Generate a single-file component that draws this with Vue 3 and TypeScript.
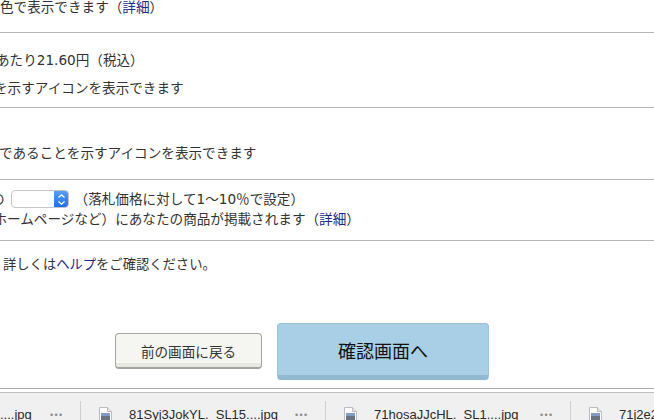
<script setup lang="ts">
interface Download {
  name: string
}

const downloads: Download[] = [
  { name: '81Syj3JokYL._SL15....jpg' },
  { name: '71hosaJJcHL._SL1....jpg' },
  { name: '71j2e2' }
]
</script>

<template>
  <div class="page">
    <main class="form">
      <section class="row row-color">
        <p class="line">色で表示できます（<a>詳細</a>）</p>
      </section>
      <section class="row row-price">
        <p class="line clip-a">あたり21.60円（税込）</p>
        <p class="line line-icon clip-b">を示すアイコンを表示できます</p>
      </section>
      <section class="row row-badge">
        <p class="line clip-c">であることを示すアイコンを表示できます</p>
      </section>
      <section class="row row-affiliate">
        <p class="line line-select clip-d">
          の
          <span class="select">
            <span class="select-arrows">
              <svg width="9" height="13" viewBox="0 0 9 13" fill="none" stroke="#fff" stroke-width="1.3">
                <path d="M1.5 4.5 4.5 1.8 7.5 4.5" />
                <path d="M1.5 8.5 4.5 11.2 7.5 8.5" />
              </svg>
            </span>
          </span>
          <span class="select-note">（落札価格に対して1〜10％で設定）</span>
        </p>
        <p class="line clip-e">ホームページなど）にあなたの商品が掲載されます（<a>詳細</a>）</p>
      </section>
      <section class="row-help">
        <p class="line">詳しくは<a>ヘルプ</a>をご確認ください。</p>
      </section>
      <div class="actions">
        <button class="btn-back" type="button">前の画面に戻る</button>
        <button class="btn-next" type="button">確認画面へ</button>
      </div>
    </main>
    <footer class="shelf">
      <div class="shelf-item shelf-first">
        <span class="file-name">....jpg</span>
        <span class="dots">•••</span>
      </div>
      <div v-for="d in downloads" :key="d.name" class="shelf-item">
        <svg class="file-icon" width="13" height="18" viewBox="0 0 13 18">
          <path d="M.5.5H8.5L12.5 4.5V17.5H.5Z" fill="#fbfbfb" stroke="#b9bcc2" />
          <path d="M8.5.5V4.5H12.5" fill="#e4e6ea" stroke="#b9bcc2" />
          <rect x="2" y="6" width="9" height="5" fill="#7f9dc4" />
          <rect x="2" y="9" width="9" height="4" fill="#6a7480" />
        </svg>
        <span class="file-name">{{ d.name }}</span>
        <span class="dots">•••</span>
      </div>
    </footer>
  </div>
</template>

<style scoped>
.page {
  width: 654px;
  height: 420px;
  overflow: hidden;
  display: flex;
  flex-direction: column;
  background: #fff;
  color: #333;
  font-family: "DejaVu Sans", "Noto Sans CJK JP", sans-serif;
  font-size: 13.6px;
}

.form {
  height: 389px;
  flex: none;
  border-bottom: 1px solid #a9a9a9;
  box-sizing: border-box;
}

.row {
  border-bottom: 1px solid #b5b5b5;
  box-sizing: border-box;
}

.row-color {
  height: 33px;
}

.row-price {
  height: 75px;
  padding-top: 17px;
}

.row-badge {
  height: 72px;
  padding-top: 35px;
}

.row-affiliate {
  height: 61px;
  padding-top: 9px;
}

.row-help {
  padding: 14px 0 0 3px;
  font-size: 13.3px;
}

.line {
  margin: 0;
  height: 20px;
  line-height: 20px;
  white-space: nowrap;
}

.row-color .line {
  height: 14px;
  line-height: 14px;
}

.line-icon {
  margin-top: 8px;
}

.clip-a {
  margin-left: -4px;
}

.clip-b {
  margin-left: -6px;
}

.clip-c {
  margin-left: -1px;
}

.clip-d {
  margin-left: -9px;
}

.clip-e {
  margin-left: -6.5px;
}

a {
  color: #1a2a8c;
}

.line-select {
  display: flex;
  align-items: center;
}

.select {
  display: inline-flex;
  justify-content: flex-end;
  width: 58px;
  height: 18px;
  margin-left: 6px;
  box-sizing: border-box;
  border: 1px solid #c4c4c4;
  border-radius: 4px;
  background: #fff;
  overflow: hidden;
}

.select-arrows {
  display: flex;
  align-items: center;
  justify-content: center;
  width: 15px;
  margin: -1px -1px -1px 0;
  background: linear-gradient(#5aa2fb, #1a6cf0);
}

.select-note {
  margin-left: 6px;
}

.actions {
  display: flex;
  align-items: flex-end;
  gap: 15px;
  margin-top: 48px;
  padding-left: 115px;
}

.btn-back {
  width: 147px;
  height: 36px;
  margin-bottom: 11px;
  border: 1px solid #a5a5a0;
  border-bottom-width: 2px;
  border-radius: 4px;
  background: linear-gradient(#f5f5f1 88%, #e8e8e3 88%);
  color: #333;
  font: inherit;
}

.btn-next {
  width: 212px;
  height: 57px;
  margin-bottom: 0;
  border: 1px solid #9cc3dc;
  border-bottom: 5px solid #8fb9d3;
  border-radius: 4px;
  background: #a8cfe6;
  color: #111;
  font: inherit;
  font-size: 18px;
}

.shelf {
  flex: 1;
  display: flex;
  margin-top: 3px;
  border-top: 1px solid #bdbdbd;
  background: #f0f0f0;
  padding-top: 8px;
}

.shelf-item {
  flex: none;
  width: 245px;
  height: 40px;
  box-sizing: border-box;
  display: flex;
  align-items: flex-start;
  padding-left: 18px;
  border-right: 1px solid #cfcfcf;
  font-family: "Liberation Sans", sans-serif;
  font-size: 13px;
  color: #2b2b2b;
}

.shelf-first {
  width: 81px;
  padding-left: 0;
}

.file-icon {
  flex: none;
  margin-top: 6px;
}

.file-name {
  width: 166px;
  margin-left: 17px;
  padding-top: 6px;
  line-height: 16px;
  white-space: nowrap;
}

.shelf-first .file-name {
  width: 50px;
  margin-left: 0;
}

.dots {
  padding-top: 6px;
  font-size: 9px;
  line-height: 16px;
  letter-spacing: 1.4px;
  color: #8a8a8a;
}
</style>
